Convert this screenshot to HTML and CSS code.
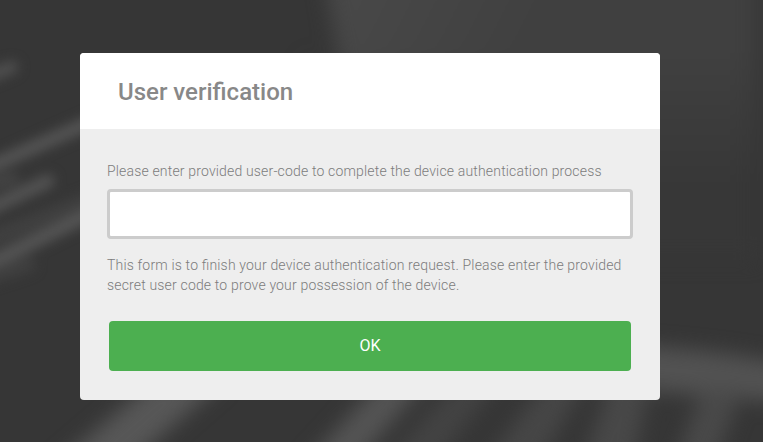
FILE: index.html
```
<!DOCTYPE html>
<html lang="en">
<head>
    <meta charset="utf-8">
    <title>User verification</title>
    <link rel="stylesheet" href="styles.css">
</head>
<body>
    <svg class="backdrop" viewBox="0 0 763 442" preserveAspectRatio="none" aria-hidden="true">
        <defs>
            <linearGradient id="panel" x1="0" y1="0" x2="1" y2="0.35">
                <stop offset="0" stop-color="#4a4a4a"/>
                <stop offset="0.5" stop-color="#404040"/>
                <stop offset="1" stop-color="#404040"/>
            </linearGradient>
            <linearGradient id="fade" x1="0" y1="0" x2="0" y2="1">
                <stop offset="0.3" stop-color="#373737" stop-opacity="0"/>
                <stop offset="0.75" stop-color="#373737"/>
            </linearGradient>
            <filter id="soft" color-interpolation-filters="sRGB" filterUnits="userSpaceOnUse" x="-60" y="-60" width="890" height="570">
                <feGaussianBlur stdDeviation="10"/>
            </filter>
            <filter id="streak" color-interpolation-filters="sRGB" filterUnits="userSpaceOnUse" x="-60" y="-60" width="890" height="570">
                <feGaussianBlur stdDeviation="6"/>
            </filter>
        </defs>
        <rect width="763" height="442" fill="#363636"/>
        <g filter="url(#soft)">
            <path d="M322-40L342 80L366 260H757V-40Z" fill="url(#panel)"/>
            <path d="M300-40H757V260H300Z" fill="url(#fade)"/>
            <path d="M600 345Q690 345 800 366V404Q700 394 600 386Z" fill="#525252"/>
            <path d="M155 380H225L122 470H50Z" fill="#575757"/>
            <path d="M382 380H428L350 470H300Z" fill="#545454"/>
            <path d="M458 380H500L430 470H380Z" fill="#434343"/>
            <path d="M547 380H587L535 470H480Z" fill="#464646"/>
            <path d="M612 380H650L632 470H580Z" fill="#484848"/>
            <path d="M702 390H742L712 470H672Z" fill="#494949"/>
        </g>
        <g class="streaks" filter="url(#streak)">
            <path d="M-20 80L12 67" stroke="#515151" stroke-width="12"/>
            <path d="M-20 171L100 118" stroke="#555" stroke-width="13"/>
            <path d="M-20 188L13 178" stroke="#464646" stroke-width="11"/>
            <path d="M-20 213L48 181" stroke="#545454" stroke-width="13"/>
            <path d="M-10 239L90 200" stroke="#404040" stroke-width="16"/>
            <path d="M-20 268L100 209" stroke="#555" stroke-width="14"/>
            <path d="M-15 278L28 264" stroke="#404040" stroke-width="15"/>
        </g>
    </svg>

    <div class="card">
        <div class="card-header">
            <h1>User verification</h1>
        </div>
        <form class="card-body" method="POST">
            <label for="userCode">Please enter provided user-code to complete the device authentication process</label>
            <input type="text" id="userCode" name="user_code" autocomplete="off">
            <p>This form is to finish your device authentication request. Please enter the provided secret user code to prove your possession of the device.</p>
            <button type="submit">OK</button>
        </form>
    </div>
</body>
</html>
```

FILE: styles.css
```
* {
  box-sizing: border-box;
}
body {
  margin: 0;
  height: 442px;
  padding: 53px 0 0 80px;
  overflow: hidden;
  background-color: #363636;
  color: #888;
  font-family: Roboto, "Liberation Sans", sans-serif;
  font-size: 14px;
  font-weight: 300;
  line-height: 20px;
}
.backdrop {
  position: absolute;
  top: 0;
  left: 0;
  width: 763px;
  height: 442px;
  z-index: -1;
}
.streaks {
  fill: none;
  stroke-linecap: round;
}
.card {
  width: 580px;
  height: 347px;
  border-radius: 4px;
  background-color: #eee;
  overflow: hidden;
}
.card-header {
  height: 76px;
  padding: 23px 38px;
  background-color: #fff;
}
h1 {
  margin: 0;
  font-size: 24px;
  font-weight: 500;
  line-height: 32px;
}
.card-body {
  padding: 32px 27px 29px;
}
label,
p {
  color: #7c7c7c;
  letter-spacing: 0.17px;
  font-feature-settings: "liga" 1;
}
label {
  display: block;
  margin-bottom: 8px;
}
input[type="text"] {
  display: block;
  width: 100%;
  height: 50px;
  padding: 8px 12px;
  border: 3px solid #ccc;
  border-radius: 4px;
  background-color: #fff;
  font: inherit;
  outline: none;
}
p {
  margin: 16px 0 26px;
}
button {
  display: block;
  width: 522px;
  height: 50px;
  margin: 0 auto;
  padding: 0 0 2px;
  border: none;
  border-radius: 4px;
  background-color: #4caf50;
  color: #fff;
  font-family: inherit;
  font-size: 16px;
  font-weight: 400;
  cursor: pointer;
}
```
